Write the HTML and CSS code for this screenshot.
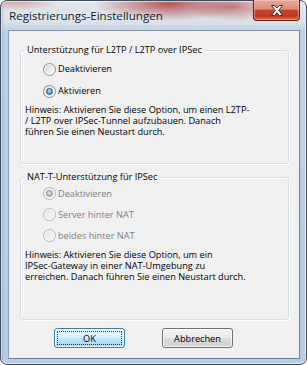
FILE: index.html
```html
<!DOCTYPE html>
<html lang="de">
<head>
<meta charset="utf-8">
<title>Registrierungs-Einstellungen</title>
<link rel="stylesheet" href="styles.css">
</head>
<body>
<div class="window">
  <div class="titlebar">
    <span class="title">Registrierungs-Einstellungen</span>
    <button class="close" aria-label="Schließen">
      <svg width="12" height="11" viewBox="0 0 12 11">
        <polygon points="0.5,0.5 3.7,0.5 6,3.2 8.3,0.5 11.5,0.5 7.8,5.3 11.5,10.5 8.3,10.5 6,7.6 3.7,10.5 0.5,10.5 4.2,5.3" fill="#ffffff" stroke="#40322f" stroke-width="1" stroke-linejoin="round"/>
      </svg>
    </button>
  </div>
  <div class="client">
    <fieldset class="group g1">
      <legend>Unterstützung für L2TP / L2TP over IPSec</legend>
      <label class="row"><span class="radio"></span>Deaktivieren</label>
      <label class="row"><span class="radio checked"></span>Aktivieren</label>
      <p class="hint"><span class="line">Hinweis: Aktivieren Sie diese Option, um einen L2TP-</span><span class="line">/ L2TP over IPSec-Tunnel aufzubauen. Danach</span><span class="line">führen Sie einen Neustart durch.</span></p>
    </fieldset>
    <fieldset class="group g2">
      <legend>NAT-T-Unterstützung für IPSec</legend>
      <label class="row disabled"><span class="radio checked"></span>Deaktivieren</label>
      <label class="row disabled"><span class="radio"></span>Server hinter NAT</label>
      <label class="row disabled"><span class="radio"></span>beides hinter NAT</label>
      <p class="hint"><span class="line">Hinweis: Aktivieren Sie diese Option, um ein</span><span class="line">IPSec-Gateway in einer NAT-Umgebung zu</span><span class="line">erreichen. Danach führen Sie einen Neustart durch.</span></p>
    </fieldset>
    <div class="buttons">
      <button class="btn default">OK</button>
      <button class="btn">Abbrechen</button>
    </div>
  </div>
</div>
</body>
</html>
```

FILE: styles.css
```css
html, body {
  margin: 0;
  padding: 0;
  background: #ffffff;
}

.window {
  width: 307px;
  height: 365px;
  box-sizing: border-box;
  border: 1px solid #3d4c5e;
  border-radius: 7px;
  padding: 0 6px 5px 7px;
  display: flex;
  flex-direction: column;
  font-family: "Open Sans", "Noto Sans", sans-serif;
  background:
    radial-gradient(ellipse 75px 17px at 168px 3px, rgba(172, 52, 52, 0.8), rgba(172, 52, 52, 0) 100%),
    radial-gradient(ellipse 45px 14px at 232px 6px, rgba(182, 64, 64, 0.6), rgba(182, 64, 64, 0) 100%),
    radial-gradient(ellipse 45px 10px at 15px 0px, rgba(205, 115, 115, 0.6), rgba(205, 115, 115, 0) 100%),
    linear-gradient(90deg, rgba(90, 110, 135, 0.35) 0, rgba(90, 110, 135, 0) 3px, rgba(255, 255, 255, 0) 304px, rgba(90, 110, 135, 0.3) 307px),
    linear-gradient(#e2e6eb 0, #d8dfe7 22px, #bfd1e6 30px, #b7cce4 100%);
  box-shadow: inset 0 0 0 1px rgba(255, 255, 255, 0.55);
}

.titlebar {
  height: 29px;
  display: flex;
  justify-content: space-between;
  align-items: flex-start;
  flex: none;
}

.title {
  margin-left: 1px;
  padding-top: 7px;
  font-size: 11.6px;
  line-height: 15px;
  color: #111c2c;
  text-shadow: 0 0 6px rgba(255, 255, 255, 0.9);
}

.close {
  width: 47px;
  height: 21px;
  margin-top: -1px;
  padding: 0;
  border: 1px solid #5a2118;
  border-top: none;
  border-radius: 0 0 4px 4px;
  background: linear-gradient(#e7a899 0, #d98c7c 45%, #c54630 52%, #c13a22 78%, #d9643e 100%);
  box-shadow: inset 0 0 0 1px rgba(255, 210, 200, 0.45);
  display: flex;
  align-items: center;
  justify-content: center;
}

.close svg {
  display: block;
}

.client {
  flex: 1;
  background: #f0f0f0;
  border: 1px solid #6f8195;
  border-top-color: #8597ab;
  border-left-color: #8d9fb2;
  padding-top: 13px;
  font-size: 9.2px;
  color: #000000;
  display: flex;
  flex-direction: column;
}

.group {
  margin: 0 10px 0 11px;
  border: 1px solid #d5dfe5;
  border-radius: 3px;
  padding: 0 4px;
  min-inline-size: 0;
  box-shadow: inset 1px 1px 0 #ffffff, 1px 1px 0 #ffffff;
}

.group legend {
  padding: 0 2px;
  line-height: 12px;
  height: 12px;
}

.g1 {
  padding-top: 2px;
  padding-bottom: 26px;
}

.g2 {
  margin-top: 7px;
  padding-top: 0;
  padding-bottom: 37.5px;
}

.row {
  display: flex;
  align-items: center;
  gap: 2px;
  padding-left: 18px;
  height: 22px;
  line-height: 12px;
}

.g2 .row {
  height: 21px;
}

.row.disabled {
  color: #808080;
}

.radio {
  flex: none;
  width: 13px;
  height: 13px;
  box-sizing: border-box;
  border-radius: 50%;
  border: 1px solid #8b8d8f;
  background: linear-gradient(135deg, #c9ccd0 0%, #e8e9eb 45%, #ffffff 100%);
  box-shadow: inset 0 0 0 1px rgba(255, 255, 255, 0.7);
  position: relative;
}

.radio.checked::after {
  content: "";
  position: absolute;
  left: 2px;
  top: 2px;
  width: 7px;
  height: 7px;
  box-sizing: border-box;
  border-radius: 50%;
  border: 1px solid #245a8c;
  background: radial-gradient(circle at 45% 40%, #c0e8ff 0, #5cb0e6 45%, #2a70b0 100%);
}

.disabled .radio {
  border-color: #b5b7b9;
  background: linear-gradient(135deg, #e0e1e3 0%, #eeeff0 50%, #f8f8f8 100%);
}

.disabled .radio.checked::after {
  border-color: #8f9193;
  background: radial-gradient(circle at 45% 40%, #e6e6e6 0, #b9b9b9 55%, #a2a2a2 100%);
}

.hint {
  margin: 2px 0 0 0;
  white-space: nowrap;
}

.hint .line {
  display: block;
  height: 11px;
  line-height: 11px;
}

.g2 .hint {
  margin-top: 2.5px;
}

.buttons {
  display: flex;
  gap: 37px;
  padding-left: 45px;
  margin-top: 8px;
}

.btn {
  width: 71px;
  height: 20px;
  box-sizing: border-box;
  padding: 0;
  border: 1px solid #707070;
  border-radius: 3px;
  font-family: "Open Sans", "Noto Sans", sans-serif;
  font-size: 9.2px;
  color: #000000;
  background: linear-gradient(#f2f2f2 0, #ebebeb 50%, #dddddd 50%, #cfcfcf 100%);
  box-shadow: inset 0 0 0 1px rgba(255, 255, 255, 0.75);
}

.btn.default {
  border-color: #3c7fb1;
  background: linear-gradient(#eaf6fd 0, #d9f0fc 50%, #bee6fd 50%, #a7d9f5 100%);
  outline: 1px dotted #6b2416;
  outline-offset: -4px;
}
```
